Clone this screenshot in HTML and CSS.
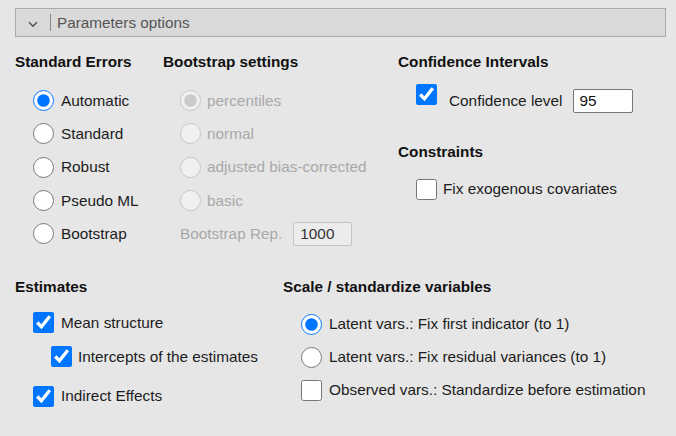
FILE: index.html
```html
<!DOCTYPE html>
<html>
<head>
<meta charset="utf-8">
<link rel="stylesheet" href="styles.css">
</head>
<body>
<div class="panel-header">
  <svg class="chev" width="10" height="7" viewBox="0 0 10 7"><path d="M1 1.2 L5 5.2 L9 1.2" fill="none" stroke="#555" stroke-width="1.6"/></svg>
  <span class="divider"></span>
  <span class="title">Parameters options</span>
</div>
<div class="content">
  <div class="top">
    <section class="col col-se">
      <h3>Standard Errors</h3>
      <div class="opts">
        <label class="opt"><input type="radio" name="se" checked><span>Automatic</span></label>
        <label class="opt"><input type="radio" name="se"><span>Standard</span></label>
        <label class="opt"><input type="radio" name="se"><span>Robust</span></label>
        <label class="opt"><input type="radio" name="se"><span>Pseudo ML</span></label>
        <label class="opt"><input type="radio" name="se"><span>Bootstrap</span></label>
      </div>
    </section>
    <section class="col col-bs">
      <h3>Bootstrap settings</h3>
      <div class="opts">
        <label class="opt dis"><input type="radio" name="bs" checked disabled><span>percentiles</span></label>
        <label class="opt dis"><input type="radio" name="bs" disabled><span>normal</span></label>
        <label class="opt dis"><input type="radio" name="bs" disabled><span>adjusted bias-corrected</span></label>
        <label class="opt dis"><input type="radio" name="bs" disabled><span>basic</span></label>
        <div class="opt rep"><span>Bootstrap Rep.</span><input class="field field-dis" type="text" value="1000" disabled></div>
      </div>
    </section>
    <section class="col col-ci">
      <h3>Confidence Intervals</h3>
      <div class="ci-row">
        <input type="checkbox" checked>
        <div class="ci-field"><span>Confidence level</span><input class="field" type="text" value="95"></div>
      </div>
      <h3 class="h-constraints">Constraints</h3>
      <label class="opt exog"><input type="checkbox"><span>Fix exogenous covariates</span></label>
    </section>
  </div>
  <div class="bottom">
    <section class="col col-est">
      <h3>Estimates</h3>
      <div class="est-opts">
        <label class="opt"><input type="checkbox" checked><span>Mean structure</span></label>
        <label class="opt sub"><input type="checkbox" checked><span>Intercepts of the estimates</span></label>
        <label class="opt indirect"><input type="checkbox" checked><span>Indirect Effects</span></label>
      </div>
    </section>
    <section class="col col-scale">
      <h3>Scale / standardize variables</h3>
      <div class="scale-opts">
        <label class="opt"><input type="radio" name="sc" checked><span>Latent vars.: Fix first indicator (to 1)</span></label>
        <label class="opt"><input type="radio" name="sc"><span>Latent vars.: Fix residual variances (to 1)</span></label>
        <label class="opt"><input type="checkbox"><span>Observed vars.: Standardize before estimation</span></label>
      </div>
    </section>
  </div>
</div>
</body>
</html>
```

FILE: styles.css
```css
html, body {
  margin: 0;
  padding: 0;
}
body {
  width: 676px;
  height: 436px;
  overflow: hidden;
  background: #e6e6e6;
  font-family: "Liberation Sans", Arial, sans-serif;
  font-size: 15.35px;
  color: #1c1c1c;
  padding-top: 8px;
  box-sizing: border-box;
}

.panel-header {
  margin: 0 10px 0 15px;
  height: 29px;
  box-sizing: border-box;
  border: 1px solid #ababab;
  background: #d9d9d9;
  display: flex;
  align-items: center;
}
.chev {
  margin-left: 12px;
  margin-top: 3px;
  display: block;
}
.divider {
  width: 1px;
  height: 17px;
  background: #8c8c8c;
  margin-left: 12px;
}
.title {
  margin-left: 6px;
  color: #555;
  font-size: 15.3px;
}

.content {
  padding-left: 15px;
}
.top {
  display: flex;
  margin-top: 16px;
}
h3 {
  margin: 0;
  font-size: 15.3px;
  line-height: 18px;
  font-weight: bold;
  color: #111;
}
.col-se { width: 148px; }
.col-bs { width: 235px; }
.col-ci { flex: 1; }

.opts {
  margin-top: 13px;
}
.opt {
  display: flex;
  align-items: center;
  height: 33.3px;
}
input[type="radio"],
input[type="checkbox"] {
  width: 21px;
  height: 21px;
  margin: 0;
  flex: none;
}
.opt input[type="radio"],
.opt input[type="checkbox"] {
  margin-left: 18px;
}
.opt span {
  margin-left: 7px;
}
.col-bs .opt input[type="radio"] {
  margin-left: 17px;
}
.col-bs .opt span {
  margin-left: 6px;
}
.dis {
  color: #a9a9a9;
}
.rep span {
  margin-left: 17px !important;
  color: #a9a9a9;
}
.rep .field {
  margin-left: 11px;
}

.field {
  width: 60px;
  height: 24px;
  box-sizing: border-box;
  border: 1px solid #777;
  border-radius: 2px;
  background: #fff;
  font-family: "Liberation Sans", Arial, sans-serif;
  font-size: 15.3px;
  color: #111;
  padding: 0 0 0 5px;
  margin: 0;
}
.field-dis {
  width: 59px;
  border-color: #c4c4c4;
  background: #ececec;
  color: #333;
  padding-left: 6px;
}

.ci-row {
  margin-top: 13px;
  display: flex;
  align-items: flex-start;
}
.ci-row input[type="checkbox"] {
  margin-left: 18px;
}
.ci-field {
  display: flex;
  align-items: center;
  margin-top: 5px;
  margin-left: 12px;
}
.ci-field .field {
  margin-left: 11px;
}
.h-constraints {
  margin-top: 30px;
}
.exog {
  margin-top: 11.5px;
  height: 33px;
}
.exog span {
  margin-left: 6px;
}

.bottom {
  display: flex;
  margin-top: 27.5px;
}
.col-est { width: 268px; }
.col-scale { flex: 1; }

.est-opts {
  margin-top: 10px;
}
.est-opts .opt {
  height: 34px;
}
.sub {
  padding-left: 18px;
}
.sub span {
  margin-left: 6px;
}
.indirect {
  margin-top: 5.5px;
}

.scale-opts {
  margin-top: 12px;
}
.scale-opts .opt {
  height: 33px;
}
```
